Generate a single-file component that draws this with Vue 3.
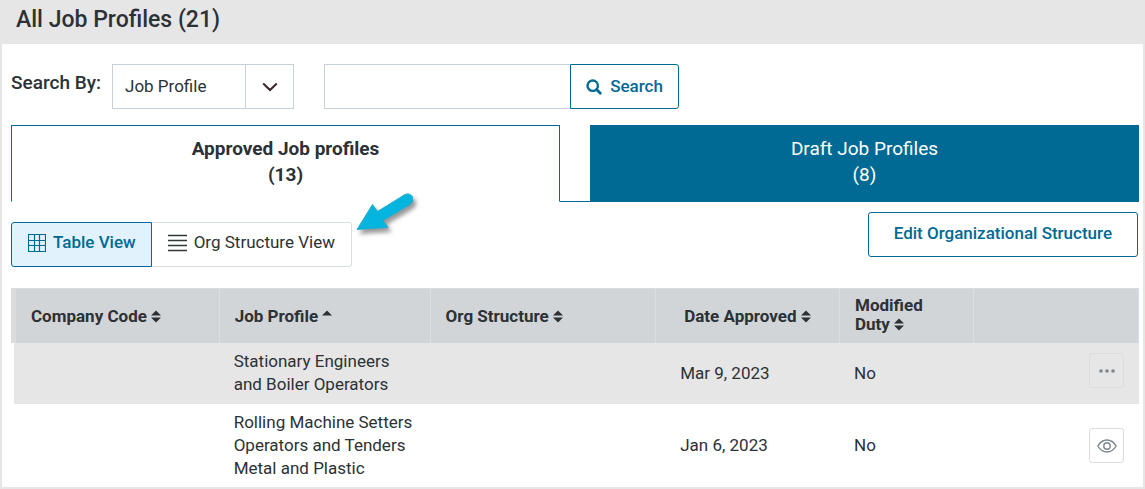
<script setup>
import { ref } from 'vue'

const searchField = ref('Job Profile')
const query = ref('')
const activeView = ref('table')

const columns = [
  { key: 'code', label: 'Company Code', sort: 'both' },
  { key: 'profile', label: 'Job Profile', sort: 'up' },
  { key: 'org', label: 'Org Structure', sort: 'both' },
  { key: 'date', label: 'Date Approved', sort: 'both' },
  { key: 'duty', label: 'Modified Duty', sort: 'both' },
]

const rows = [
  { code: '', profile: 'Stationary Engineers and Boiler Operators', org: '', date: 'Mar 9, 2023', duty: 'No', action: 'more' },
  { code: '', profile: 'Rolling Machine Setters Operators and Tenders Metal and Plastic', org: '', date: 'Jan 6, 2023', duty: 'No', action: 'view' },
]
</script>

<template>
  <main class="panel">
    <header class="panel-head">
      <h1>All Job Profiles (21)</h1>
    </header>

    <div class="panel-body">
      <form class="search" @submit.prevent>
        <label class="search-label" for="search-field">Search By:</label>
        <div class="select">
          <select id="search-field" v-model="searchField">
            <option>Job Profile</option>
          </select>
          <span class="select-arrow">
            <svg width="16" height="10" viewBox="0 0 16 10" aria-hidden="true">
              <path d="M1.200 1.500 8 8l6.800-6.500" fill="none" stroke="#3b2326" stroke-width="2" />
            </svg>
          </span>
        </div>
        <div class="query">
          <input v-model="query" type="text" aria-label="Search text" />
          <button type="submit" class="btn search-btn">
            <svg width="16" height="16" viewBox="0 0 16 16" aria-hidden="true">
              <circle cx="6.700" cy="6.700" r="5.200" fill="none" stroke="currentColor" stroke-width="2.400" />
              <path d="m10.500 10.500 3.800 3.800" stroke="currentColor" stroke-width="2.800" stroke-linecap="round" />
            </svg>
            Search
          </button>
        </div>
      </form>

      <div class="tabs" role="tablist">
        <button type="button" role="tab" aria-selected="true" class="tab active">
          <span>Approved Job profiles</span><span>(13)</span>
        </button>
        <span class="tab-gap"></span>
        <button type="button" role="tab" aria-selected="false" class="tab">
          <span>Draft Job Profiles</span><span>(8)</span>
        </button>
      </div>

      <div class="toolbar">
        <div class="views">
          <button type="button" class="view" :class="{ on: activeView === 'table' }" @click="activeView = 'table'">
            <svg width="18" height="18" viewBox="0 0 18 18" aria-hidden="true">
              <path d="M.5.5h17v17H.5zM6.500.5v17M11.500.5v17M.5 6.500h17M.5 11.500h17" fill="none" stroke="currentColor" stroke-width="1.200" />
            </svg>
            Table View
          </button>
          <button type="button" class="view" :class="{ on: activeView === 'org' }" @click="activeView = 'org'">
            <svg width="19" height="18" viewBox="0 0 19 18" aria-hidden="true">
              <path d="M0 1.500h19M0 6.500h19M0 11.500h19M0 16.500h19" stroke="#33373b" stroke-width="1.400" />
            </svg>
            Org Structure View
          </button>
          <svg class="pointer" width="66" height="52" viewBox="0 0 66 52" aria-hidden="true">
            <path d="M5 39.500 20.500 14.500 25.500 21.500 53 4.500Q58 2.500 60.500 7 62 11.500 58 14.500L31 30.500 36 37.500Z" fill="#03b5df" stroke="#25a9cb" />
          </svg>
        </div>
        <button type="button" class="btn edit-btn">Edit Organizational Structure</button>
      </div>

      <table>
        <colgroup>
          <col v-for="c in columns" :key="c.key" :class="'w-' + c.key" />
          <col />
        </colgroup>
        <thead>
          <tr>
            <th v-for="c in columns" :key="c.key" scope="col" :class="'h-' + c.key">
              <button type="button" class="sort">
                {{ c.label }}
                <svg width="10" height="13" viewBox="0 0 10 13" aria-hidden="true">
                  <path d="M5 .5 10 5.500H0z" fill="currentColor" />
                  <path v-if="c.sort === 'both'" d="M5 12.500 0 7.500h10z" fill="currentColor" />
                </svg>
              </button>
            </th>
            <td></td>
          </tr>
        </thead>
        <tbody>
          <tr v-for="row in rows" :key="row.profile">
            <td>{{ row.code }}</td>
            <td>{{ row.profile }}</td>
            <td>{{ row.org }}</td>
            <td class="c-date">{{ row.date }}</td>
            <td>{{ row.duty }}</td>
            <td class="c-action">
              <button v-if="row.action === 'more'" type="button" class="icon-btn" aria-label="More actions">
                <svg width="16" height="4" viewBox="0 0 16 4" aria-hidden="true">
                  <g fill="#7b858c"><circle cx="2" cy="2" r="1.800" /><circle cx="8" cy="2" r="1.800" /><circle cx="14" cy="2" r="1.800" /></g>
                </svg>
              </button>
              <button v-else type="button" class="icon-btn" aria-label="View profile">
                <svg width="20" height="14" viewBox="0 0 20 14" aria-hidden="true">
                  <g fill="none" stroke="#7b858c" stroke-width="1.400">
                    <path d="M.8 7Q4.500 1 10 1t9.200 6Q15.500 13 10 13T.8 7Z" />
                    <circle cx="10" cy="7" r="3.200" />
                  </g>
                </svg>
              </button>
            </td>
          </tr>
        </tbody>
      </table>
    </div>
  </main>
</template>

<style>
body {
  background: #fff;
}
</style>

<style scoped>
.panel {
  box-sizing: border-box;
  min-height: 100vh;
  border: 2px solid #e6e6e6;
  border-top: 0;
  font-family: Roboto, "Liberation Sans", sans-serif;
  font-size: 17px;
  line-height: 23px;
  color: #2c3135;
}
button,
select,
input {
  box-sizing: border-box;
  margin: 0;
  font: inherit;
  color: inherit;
}
button {
  cursor: pointer;
}
.panel-head {
  background: #e6e6e6;
  padding: 6px 14px 10px;
}
h1 {
  margin: 0;
  font-size: 23px;
  line-height: 28px;
  font-weight: 500;
}
.panel-body {
  padding: 20px 4px 0 9px;
}
.search {
  display: flex;
}
.search-label {
  width: 101px;
  padding-top: 7px;
  font-size: 19px;
  font-weight: 500;
}
.select {
  position: relative;
  width: 182px;
  margin-right: 30px;
}
.select select {
  width: 100%;
  height: 45px;
  padding: 0 60px 0 12px;
  border: 1px solid #c8d1da;
  border-radius: 0;
  background: #fff;
  appearance: none;
}
.select-arrow {
  position: absolute;
  top: 0;
  right: 0;
  bottom: 0;
  width: 48px;
  display: flex;
  align-items: center;
  justify-content: center;
  border-left: 1px solid #c8d1da;
  pointer-events: none;
}
.query {
  display: flex;
}
.query input {
  width: 246px;
  height: 45px;
  padding: 0 12px;
  border: 1px solid #c8d1da;
  border-right: 0;
  border-radius: 0;
}
.btn {
  height: 45px;
  border: 1px solid #006a94;
  border-radius: 3px;
  background: #fff;
  color: #006a94;
  font-weight: 500;
}
.search-btn {
  display: flex;
  align-items: center;
  justify-content: center;
  gap: 8px;
  width: 109px;
  padding: 0;
  border-radius: 0 3px 3px 0;
}
.tabs {
  display: flex;
  margin-top: 16px;
}
.tab {
  flex: 1 1 0;
  display: flex;
  flex-direction: column;
  align-items: center;
  height: 77px;
  padding: 10px 0 0;
  border: 1px solid #006a94;
  background: #006a94;
  color: #fff;
  font-size: 19px;
  line-height: 26px;
}
.tab.active {
  border-bottom-color: #fff;
  background: #fff;
  color: #2c3135;
  font-weight: 700;
}
.tab-gap {
  width: 30px;
  border-bottom: 1px solid #006a94;
}
.toolbar {
  display: flex;
  align-items: flex-start;
  justify-content: space-between;
  padding: 10px 1px 0 0;
}
.views {
  position: relative;
  display: flex;
  margin-top: 10px;
}
.view {
  display: flex;
  align-items: center;
  gap: 7px;
  height: 45px;
  padding: 0 16px 4px;
  border: 1px solid #d6dee0;
  border-radius: 0 3px 3px 0;
  border-left: 0;
  background: #fff;
}
.view.on {
  padding: 0 15px 4px 16px;
  border: 1px solid #006a94;
  border-radius: 3px 0 0 3px;
  background: #e1f2fc;
  color: #006a94;
  font-weight: 500;
}
.pointer {
  position: absolute;
  left: 100%;
  top: -32px;
  filter: drop-shadow(3px 4px 2px rgba(0, 0, 0, 0.4));
}
.edit-btn {
  padding: 0 25px 2px;
}
table {
  width: 100%;
  margin-top: 21px;
  border-collapse: separate;
  border-spacing: 0;
  table-layout: fixed;
}
.w-code {
  width: 18.500%;
}
.w-profile {
  width: 18.700%;
}
.w-org {
  width: 20%;
}
.w-date {
  width: 16.300%;
}
.w-duty {
  width: 11.900%;
}
th,
thead td {
  height: 54px;
  padding: 0 15px;
  border-top: 1px solid #dcdcdc;
  border-right: 1px solid #dcdfe1;
  background: #d1d5d8;
  text-align: left;
}
.h-code {
  border-left: 5px solid #dcdcdc;
}
.h-date {
  padding-left: 28px;
}
.h-duty {
  padding-right: 32px;
}
.sort {
  padding: 0 0 2px;
  border: 0;
  background: none;
  font-weight: 700;
  font-size: 17px;
  line-height: 19px;
  text-align: left;
}
.sort svg {
  vertical-align: -1px;
}
tbody td {
  padding: 7px 14px 8px;
}
tbody tr:last-child td {
  padding-bottom: 7px;
}
tbody td:first-child {
  border-left: 3px solid #fff;
}
tbody tr:nth-child(odd) td {
  background: #e6e6e6;
  background-clip: padding-box;
}
tbody .c-date {
  padding-left: 24px;
}
tbody tr .c-action {
  padding-right: 15px;
  text-align: right;
}
tbody tr:first-child .c-action {
  padding-top: 0;
  padding-bottom: 6px;
}
.icon-btn {
  display: inline-flex;
  align-items: center;
  justify-content: center;
  width: 35px;
  height: 35px;
  padding: 0;
  border: 1px solid #dcdcdc;
  border-radius: 3px;
  background: transparent;
  vertical-align: middle;
}
</style>
